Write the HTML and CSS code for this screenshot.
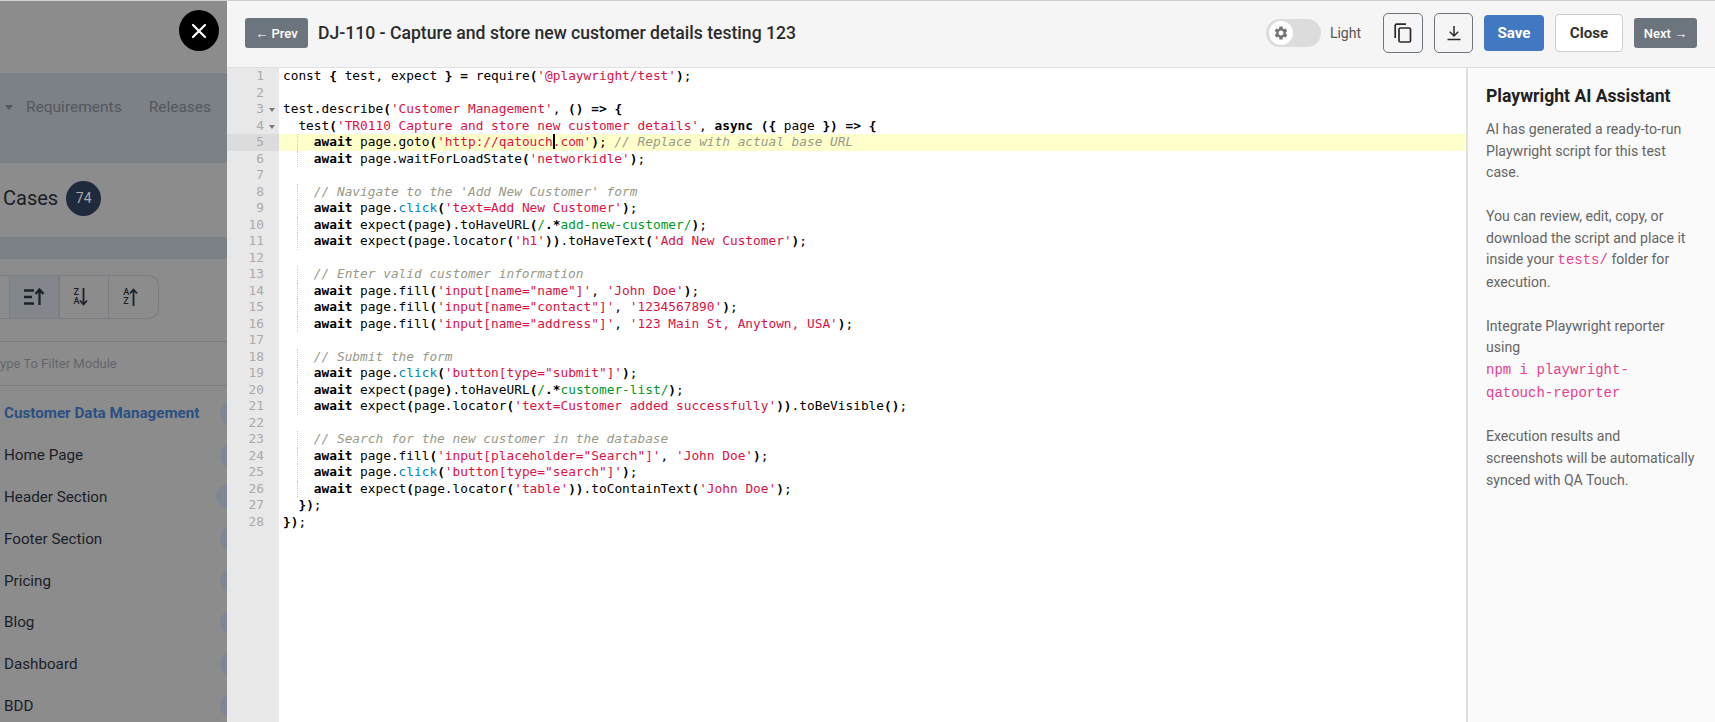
FILE: index.html
```html
<!DOCTYPE html>
<html lang="en">
<head>
    <meta charset="UTF-8">
    <title>Playwright Script</title>
    <link rel="stylesheet" href="styles.css">
</head>
<body>
    <div class="page">
        <!-- dimmed page behind the drawer -->
        <div class="backdrop">
            <div class="top-space"></div>
            <div class="nav-band">
                <span class="nav-caret"></span>
                <span class="nav-link">Requirements</span>
                <span class="nav-link">Releases</span>
            </div>
            <div class="cases-row">
                <span class="cases-title">Cases</span>
                <span class="cases-count">74</span>
            </div>
            <div class="thin-band"></div>
            <div class="module-panel">
                <div class="sort-bar">
                    <div class="sort-btn sort-first"></div>
                    <div class="sort-btn sort-active">
                        <svg width="22" height="18" viewBox="0 0 22 18"><path d="M1 2.5h10M1 9h8M1 15.5h10M16.5 17V2M12.5 6l4-4.5 4 4.5" fill="none" stroke="#1c2129" stroke-width="2.3"/></svg>
                    </div>
                    <div class="sort-btn sort-az">
                        <span class="az"><span>Z</span><span>A</span></span>
                        <svg width="9" height="18" viewBox="0 0 9 18"><path d="M4.5 0v16M1 12.5l3.5 4 3.5-4" fill="none" stroke="#1c2129" stroke-width="1.8"/></svg>
                    </div>
                    <div class="sort-btn sort-az">
                        <span class="az"><span>A</span><span>Z</span></span>
                        <svg width="9" height="18" viewBox="0 0 9 18"><path d="M4.5 18V2M1 5.5l3.5-4 3.5 4" fill="none" stroke="#1c2129" stroke-width="1.8"/></svg>
                    </div>
                </div>
                <div class="filter">ype To Filter Module</div>
                <div class="module-list">
                    <div class="module current"><span>Customer Data Management</span><i class="pill"></i></div>
                    <div class="module"><span>Home Page</span><i class="pill"></i></div>
                    <div class="module"><span>Header Section</span><i class="pill wide"></i></div>
                    <div class="module"><span>Footer Section</span><i class="pill"></i></div>
                    <div class="module"><span>Pricing</span><i class="pill"></i></div>
                    <div class="module"><span>Blog</span><i class="pill"></i></div>
                    <div class="module"><span>Dashboard</span><i class="pill"></i></div>
                    <div class="module"><span>BDD</span><i class="pill"></i></div>
                </div>
            </div>
            <button class="drawer-x">
                <svg width="16" height="16" viewBox="0 0 16 16"><path d="M2 2l12 12M14 2L2 14" stroke="#fff" stroke-width="2.2" stroke-linecap="round"/></svg>
            </button>
        </div>

        <div class="drawer">
            <div class="drawer-head">
                <button class="btn-step">&larr; Prev</button>
                <h1>DJ-110 - Capture and store new customer details testing 123</h1>
                <div class="toggle">
                    <span class="knob">
                        <svg width="16" height="16" viewBox="0 0 24 24"><path fill="#757575" d="M19.14,12.94c0.04-0.3,0.06-0.61,0.06-0.94c0-0.32-0.02-0.64-0.07-0.94l2.03-1.58c0.18-0.14,0.23-0.41,0.12-0.61 l-1.92-3.32c-0.12-0.22-0.37-0.29-0.59-0.22l-2.39,0.96c-0.5-0.38-1.03-0.7-1.62-0.94L14.4,2.81c-0.04-0.24-0.24-0.41-0.48-0.41 h-3.84c-0.24,0-0.43,0.17-0.47,0.41L9.25,5.35C8.66,5.59,8.12,5.92,7.63,6.29L5.24,5.33c-0.22-0.08-0.47,0-0.59,0.22L2.74,8.87 C2.62,9.08,2.66,9.34,2.86,9.48l2.03,1.58C4.84,11.36,4.8,11.69,4.8,12s0.02,0.64,0.07,0.94l-2.03,1.58 c-0.18,0.14-0.23,0.41-0.12,0.61l1.92,3.32c0.12,0.22,0.37,0.29,0.59,0.22l2.39-0.96c0.5,0.38,1.03,0.7,1.62,0.94l0.36,2.54 c0.05,0.24,0.24,0.41,0.48,0.41h3.84c0.24,0,0.44-0.17,0.47-0.41l0.36-2.54c0.59-0.24,1.13-0.56,1.62-0.94l2.39,0.96 c0.22,0.08,0.47,0,0.59-0.22l1.92-3.32c0.12-0.22,0.07-0.47-0.12-0.61L19.14,12.94z M12,15.6c-1.98,0-3.6-1.62-3.6-3.6 s1.62-3.6,3.6-3.6s3.6,1.62,3.6,3.6S13.98,15.6,12,15.6z"/></svg>
                    </span>
                </div>
                <span class="toggle-label">Light</span>
                <button class="btn-icon btn-copy">
                    <svg width="18" height="20" viewBox="0 0 18 20"><path d="M12 1.2H2.5a1.3 1.3 0 0 0-1.3 1.3V15" fill="none" stroke="#2b2b2b" stroke-width="1.7"/><rect x="5" y="5" width="11.5" height="14" rx="1.3" fill="none" stroke="#2b2b2b" stroke-width="1.7"/></svg>
                </button>
                <button class="btn-icon btn-down">
                    <svg width="16" height="16" viewBox="0 0 16 16"><path d="M8 1v9.5M3.8 6.8L8 11l4.2-4.2M1.5 14.6h13" fill="none" stroke="#2b2b2b" stroke-width="1.5"/></svg>
                </button>
                <button class="btn-save">Save</button>
                <button class="btn-close">Close</button>
                <button class="btn-step btn-next">Next &rarr;</button>
            </div>

            <div class="drawer-body">
                <div class="editor">
                    <div class="gutter">
                        <div>1</div>
                        <div>2</div>
                        <div class="fold">3</div>
                        <div class="fold">4</div>
                        <div class="gutter-active">5</div>
                        <div>6</div>
                        <div>7</div>
                        <div>8</div>
                        <div>9</div>
                        <div>10</div>
                        <div>11</div>
                        <div>12</div>
                        <div>13</div>
                        <div>14</div>
                        <div>15</div>
                        <div>16</div>
                        <div>17</div>
                        <div>18</div>
                        <div>19</div>
                        <div>20</div>
                        <div>21</div>
                        <div>22</div>
                        <div>23</div>
                        <div>24</div>
                        <div>25</div>
                        <div>26</div>
                        <div>27</div>
                        <div>28</div>
                    </div>
                    <div class="code">
                        <div>const <b>{</b> test, expect <b>}</b> <b>=</b> require<b>(</b><span class="s">'@playwright/test'</span><b>)</b>;</div>
                        <div>&nbsp;</div>
                        <div>test.describe<b>(</b><span class="s">'Customer Management'</span>, <b>()</b> <b>=&gt;</b> <b>{</b></div>
                        <div>  test<b>(</b><span class="s">'TR0110 Capture and store new customer details'</span>, <b>async</b> <b>({</b> page <b>})</b> <b>=&gt;</b> <b>{</b></div>
                        <div class="line-active">  <span class="g">  </span><b>await</b> page.goto<b>(</b><span class="s">'http://qatouch<i class="caret"></i>.com'</span><b>)</b>; <span class="c">// Replace with actual base URL</span></div>
                        <div>  <span class="g">  </span><b>await</b> page.waitForLoadState<b>(</b><span class="s">'networkidle'</span><b>)</b>;</div>
                        <div>&nbsp;</div>
                        <div>  <span class="g">  </span><span class="c">// Navigate to the 'Add New Customer' form</span></div>
                        <div>  <span class="g">  </span><b>await</b> page.<span class="f">click</span><b>(</b><span class="s">'text=Add New Customer'</span><b>)</b>;</div>
                        <div>  <span class="g">  </span><b>await</b> expect<b>(</b>page<b>)</b>.toHaveURL<b>(</b><span class="r">/</span><b>.*</b><span class="r">add-new-customer/</span><b>)</b>;</div>
                        <div>  <span class="g">  </span><b>await</b> expect<b>(</b>page.locator<b>(</b><span class="s">'h1'</span><b>))</b>.toHaveText<b>(</b><span class="s">'Add New Customer'</span><b>)</b>;</div>
                        <div>&nbsp;</div>
                        <div>  <span class="g">  </span><span class="c">// Enter valid customer information</span></div>
                        <div>  <span class="g">  </span><b>await</b> page.fill<b>(</b><span class="s">'input[name="name"]'</span>, <span class="s">'John Doe'</span><b>)</b>;</div>
                        <div>  <span class="g">  </span><b>await</b> page.fill<b>(</b><span class="s">'input[name="contact"]'</span>, <span class="s">'1234567890'</span><b>)</b>;</div>
                        <div>  <span class="g">  </span><b>await</b> page.fill<b>(</b><span class="s">'input[name="address"]'</span>, <span class="s">'123 Main St, Anytown, USA'</span><b>)</b>;</div>
                        <div>&nbsp;</div>
                        <div>  <span class="g">  </span><span class="c">// Submit the form</span></div>
                        <div>  <span class="g">  </span><b>await</b> page.<span class="f">click</span><b>(</b><span class="s">'button[type="submit"]'</span><b>)</b>;</div>
                        <div>  <span class="g">  </span><b>await</b> expect<b>(</b>page<b>)</b>.toHaveURL<b>(</b><span class="r">/</span><b>.*</b><span class="r">customer-list/</span><b>)</b>;</div>
                        <div>  <span class="g">  </span><b>await</b> expect<b>(</b>page.locator<b>(</b><span class="s">'text=Customer added successfully'</span><b>))</b>.toBeVisible<b>()</b>;</div>
                        <div>&nbsp;</div>
                        <div>  <span class="g">  </span><span class="c">// Search for the new customer in the database</span></div>
                        <div>  <span class="g">  </span><b>await</b> page.fill<b>(</b><span class="s">'input[placeholder="Search"]'</span>, <span class="s">'John Doe'</span><b>)</b>;</div>
                        <div>  <span class="g">  </span><b>await</b> page.<span class="f">click</span><b>(</b><span class="s">'button[type="search"]'</span><b>)</b>;</div>
                        <div>  <span class="g">  </span><b>await</b> expect<b>(</b>page.locator<b>(</b><span class="s">'table'</span><b>))</b>.toContainText<b>(</b><span class="s">'John Doe'</span><b>)</b>;</div>
                        <div>  <b>})</b>;</div>
                        <div><b>})</b>;</div>
                    </div>
                </div>
                <aside class="assistant">
                    <h2>Playwright AI Assistant</h2>
                    <p>AI has generated a ready-to-run Playwright script for this test case.</p>
                    <p>You can review, edit, copy, or download the script and place it inside your <code>tests/</code> folder for execution.</p>
                    <p>Integrate Playwright reporter using<br><code>npm i playwright-<br>qatouch-reporter</code></p>
                    <p>Execution results and screenshots will be automatically synced with QA Touch.</p>
                </aside>
            </div>
        </div>
    </div>
</body>
</html>
```

FILE: styles.css
```css
* {
    box-sizing: border-box;
}

html, body {
    margin: 0;
    padding: 0;
    height: 100%;
    overflow: hidden;
}

body {
    font-family: 'Roboto', sans-serif;
    background-color: #fff;
}

.page {
    display: flex;
    height: 722px;
    border-top: 1px solid #cfcfcf;
}

/* dimmed page */
.backdrop {
    position: relative;
    width: 227px;
    flex-shrink: 0;
    overflow: hidden;
    background-color: #8c8c8c;
}

.top-space {
    height: 72px;
}

.nav-band {
    display: flex;
    align-items: center;
    height: 90px;
    padding: 0 0 22px 5px;
    background-color: #7c8087;
    color: #54585e;
    font-size: 15.5px;
}

.nav-caret {
    width: 0;
    height: 0;
    border-left: 4.5px solid transparent;
    border-right: 4.5px solid transparent;
    border-top: 5px solid #54585e;
    margin-right: 13px;
}

.nav-link {
    margin-right: 27px;
    white-space: nowrap;
}

.cases-row {
    display: flex;
    align-items: center;
    height: 74px;
    padding: 0 0 4px 3px;
}

.cases-title {
    font-size: 20px;
    color: #191d25;
}

.cases-count {
    display: flex;
    align-items: center;
    justify-content: center;
    width: 35px;
    height: 35px;
    margin-left: 8px;
    border-radius: 50%;
    background-color: #1f2a3c;
    color: #a6a9ae;
    font-size: 14px;
}

.thin-band {
    height: 22px;
    background-color: #7c8087;
}

.module-panel {
    padding-top: 16px;
}

.sort-bar {
    display: flex;
    width: 159px;
    height: 44px;
    border: 1px solid #797d84;
    border-left: none;
    border-radius: 0 11px 11px 0;
}

.sort-btn {
    display: flex;
    align-items: center;
    justify-content: center;
    width: 50px;
    border-left: 1px solid #797d84;
}

.sort-first {
    width: 9px;
    border-left: none;
}

.sort-active {
    background-color: #83868b;
    border-right: 1px solid #797d84;
}

.sort-az {
    padding-right: 6px;
}

.az {
    display: flex;
    flex-direction: column;
    font-size: 9px;
    font-weight: 500;
    line-height: 9.5px;
    color: #1c2129;
}

.filter {
    height: 45px;
    margin-top: 22px;
    border-top: 1px solid #797d84;
    border-bottom: 1px solid #797d84;
    line-height: 43px;
    color: #62666c;
    font-size: 13px;
}

.module-list {
    padding-top: 6.5px;
}

.module {
    display: flex;
    align-items: center;
    justify-content: space-between;
    width: 250px;
    height: 41.8px;
    padding-left: 4px;
    color: #1b2029;
    font-size: 15.2px;
}

.current {
    color: #2a5083;
    font-weight: 700;
}

.pill {
    width: 30px;
    height: 25px;
    border-radius: 13px;
    background-color: #7f8793;
}

.wide {
    width: 34px;
}

.drawer-x {
    position: absolute;
    top: 9px;
    left: 179px;
    display: flex;
    align-items: center;
    justify-content: center;
    width: 40px;
    height: 41px;
    padding: 0;
    border: none;
    border-radius: 50%;
    background-color: #000;
}

/* drawer */
.drawer {
    flex: 1;
    display: flex;
    flex-direction: column;
    min-width: 0;
}

.drawer-head {
    display: flex;
    align-items: center;
    height: 67px;
    padding: 0 18px 2px 18px;
    background-color: #f5f5f5;
    border-bottom: 1px solid #e0e0e0;
}

.drawer-head h1 {
    flex: 1;
    margin: 0 0 0 10px;
    font-size: 17.6px;
    font-weight: 500;
    color: #2b2b2b;
}

button {
    font-family: 'Roboto', sans-serif;
    cursor: pointer;
}

.btn-step {
    width: 63px;
    height: 30px;
    padding: 0;
    border: none;
    border-radius: 3px;
    background-color: #6c757d;
    color: #fff;
    font-size: 13px;
    font-weight: 500;
}

.btn-next {
    margin-left: 11px;
}

.toggle {
    display: flex;
    align-items: center;
    width: 55px;
    height: 28px;
    padding-left: 3px;
    border-radius: 14px;
    background-color: #dcdcdc;
}

.knob {
    display: flex;
    align-items: center;
    justify-content: center;
    width: 24px;
    height: 24px;
    border-radius: 50%;
    background-color: #fff;
}

.toggle-label {
    margin-left: 9px;
    margin-right: 22px;
    font-size: 14px;
    color: #555;
}

.btn-icon {
    display: flex;
    align-items: center;
    justify-content: center;
    height: 40px;
    padding: 0;
    border: 1px solid #6c757d;
    border-radius: 5px;
    background-color: transparent;
}

.btn-copy {
    width: 40px;
    margin-right: 11px;
}

.btn-down {
    width: 39px;
    margin-right: 11px;
}

.btn-save {
    width: 60px;
    height: 36px;
    padding: 0;
    border: none;
    border-radius: 4px;
    background-color: #4278c1;
    color: #fff;
    font-size: 15.2px;
    font-weight: 700;
}

.btn-close {
    width: 68px;
    height: 38px;
    margin-left: 11px;
    padding: 0;
    border: 1px solid #ccc;
    border-radius: 4px;
    background-color: #fff;
    color: #333;
    font-size: 15.2px;
    font-weight: 700;
}

.drawer-body {
    flex: 1;
    display: flex;
    min-height: 0;
}

/* editor */
.editor {
    flex: 1;
    display: flex;
    min-width: 0;
    font-family: 'DejaVu Sans Mono', monospace;
    font-size: 12.8px;
    line-height: 16.5px;
    color: #000;
}

.gutter {
    width: 52px;
    flex-shrink: 0;
    background-color: #e8e8e8;
    color: #aaa;
    text-align: right;
}

.gutter div {
    padding-right: 15px;
}

.gutter-active {
    background-color: #dcdcdc;
}

.fold {
    position: relative;
}

.fold::after {
    content: "";
    position: absolute;
    right: 4px;
    top: 7px;
    border-left: 3.5px solid transparent;
    border-right: 3.5px solid transparent;
    border-top: 4px solid #7b7b7b;
}

.code {
    flex: 1;
    min-width: 0;
}

.code div {
    padding-left: 4px;
    white-space: pre;
}

.code b {
    font-weight: 700;
}

.code .line-active {
    background-color: #ffffcc;
}

.g {
    border-left: 1px dotted #c8c8c8;
    margin-left: -1px;
    display: inline-block;
    height: 16.5px;
    vertical-align: top;
}

.s {
    color: #d14;
}

.c {
    color: #998;
    font-style: italic;
}

.f {
    color: #0086b3;
}

.r {
    color: #009926;
}

.caret {
    display: inline-block;
    width: 2px;
    height: 15px;
    margin-right: -2px;
    vertical-align: top;
    background-color: #000;
}

/* assistant */
.assistant {
    width: 249px;
    flex-shrink: 0;
    padding: 17px 16px 0 18px;
    background-color: #fafafa;
    border-left: 2px solid #e0e0e0;
    color: #666;
    font-size: 14.1px;
    line-height: 21.7px;
}

.assistant h2 {
    margin: 0 0 12px 0;
    font-size: 17.6px;
    line-height: 22px;
    font-weight: 700;
    color: #222;
}

.assistant p {
    margin: 0 0 21.8px 0;
}

.assistant code {
    font-family: 'Liberation Mono', monospace;
    font-size: 14px;
    color: #e83e8c;
}
```
